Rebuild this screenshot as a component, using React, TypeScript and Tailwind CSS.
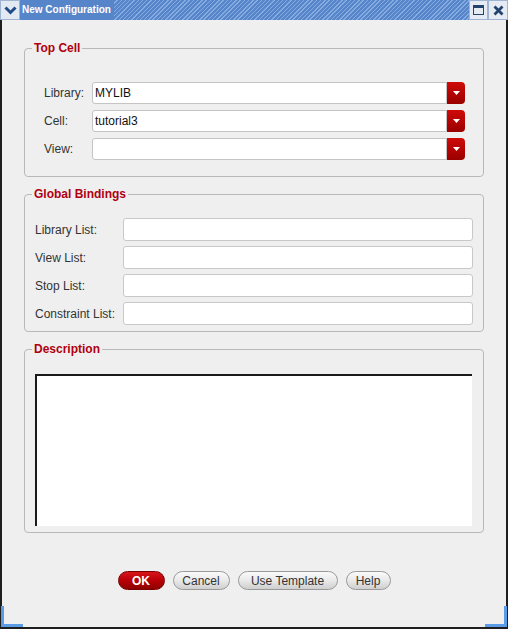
import { ReactNode } from 'react';

function Group({ title, children, className = '' }: { title: string; children: ReactNode; className?: string }) {
    return (
        <fieldset className="border border-[#b9b9b9] rounded-[4px]">
            <legend className="ml-[7px] px-[2px] text-[12px] font-bold text-[#b0000f] leading-[14px]">{title}</legend>
            <div className={className}>{children}</div>
        </fieldset>
    );
}

function ComboRow({ label, value }: { label: string; value: string }) {
    return (
        <div className="flex items-center h-[22px]">
            <span className="w-[48px] text-[12px] text-[#333]">{label}</span>
            <div className="flex-1 h-[22px] bg-white border border-[#c4c4c4] rounded-l-[3px] flex items-center pl-[2px] text-[12px] text-[#111]">
                {value}
            </div>
            <div className="w-[18px] h-[22px] rounded-r-[4px] bg-gradient-to-b from-[#d00a0a] to-[#9a0000] flex items-center justify-center">
                <svg width="7" height="4" viewBox="0 0 7 4">
                    <path d="M0 0h7L3.5 4z" fill="#fff" />
                </svg>
            </div>
        </div>
    );
}

function FieldRow({ label }: { label: string }) {
    return (
        <div className="flex items-center h-[23px]">
            <span className="w-[88px] text-[12px] text-[#333]">{label}</span>
            <div className="flex-1 h-[23px] bg-white border border-[#c8c8c8] rounded-[3px]" />
        </div>
    );
}

function Btn({ children, primary = false, className = '' }: { children: ReactNode; primary?: boolean; className?: string }) {
    return primary ? (
        <button className={`h-[19px] rounded-full bg-gradient-to-b from-[#d8141a] via-[#b80008] to-[#8f0000] border border-[#7a0000] text-white font-bold text-[12px] leading-none ${className}`}>
            {children}
        </button>
    ) : (
        <button className={`h-[19px] rounded-full bg-gradient-to-b from-[#fafafa] via-[#e9e9e9] to-[#cfcfcf] border border-[#9a9a9a] text-[#333] text-[12px] leading-none ${className}`}>
            {children}
        </button>
    );
}

export default function App() {
    return (
        <div className="relative w-[508px] h-[629px] bg-[#efefef] flex flex-col border-l-2 border-r-2 border-b-2 border-[#1e1e1e] font-['Liberation_Sans',Arial,sans-serif]">
            {/* title bar */}
            <div className="flex h-[20px] -mx-[2px] bg-[#5685c9]">
                <div className="w-[20px] h-[20px] bg-[#e3e9f3] border border-[#9fb3d2] flex items-center justify-center">
                    <svg width="13" height="9" viewBox="0 0 13 9">
                        <path d="M1.5 1.5l5 5 5-5" stroke="#1f4a86" strokeWidth="3" fill="none" />
                    </svg>
                </div>
                <span className="pl-[2px] pr-[3px] text-white font-bold text-[10px] leading-[20px] bg-[#5685c9]">New Configuration</span>
                <div className="flex-1 bg-[repeating-linear-gradient(135deg,#5685c9_0px,#5685c9_2px,#86abe0_2px,#86abe0_3px)]" />
                <div className="w-[19px] h-[20px] bg-[#e6ebf3] border border-[#9fb3d2] flex items-center justify-center">
                    <svg width="11" height="10" viewBox="0 0 11 10">
                        <rect x="0.5" y="0.5" width="10" height="9" fill="none" stroke="#23436f" />
                        <rect x="0" y="0" width="11" height="3" fill="#23436f" />
                    </svg>
                </div>
                <div className="w-[20px] h-[20px] bg-[#e6ebf3] border border-[#9fb3d2] flex items-center justify-center">
                    <svg width="11" height="11" viewBox="0 0 11 11">
                        <path d="M1.5 1.5l8 8M9.5 1.5l-8 8" stroke="#23436f" strokeWidth="2.8" />
                    </svg>
                </div>
            </div>

            <div className="flex flex-col px-[22px] pt-[21px] gap-[10px]">
                <Group title="Top Cell" className="pl-[19px] pr-[18px] pt-[27px] pb-[16px]">
                    <div className="flex flex-col gap-[6px]">
                        <ComboRow label="Library:" value="MYLIB" />
                        <ComboRow label="Cell:" value="tutorial3" />
                        <ComboRow label="View:" value="" />
                    </div>
                </Group>

                <Group title="Global Bindings" className="pl-[10px] pr-[10px] pt-[17px] pb-[6px]">
                    <div className="flex flex-col gap-[5px]">
                        <FieldRow label="Library List:" />
                        <FieldRow label="View List:" />
                        <FieldRow label="Stop List:" />
                        <FieldRow label="Constraint List:" />
                    </div>
                </Group>

                <Group title="Description" className="pl-[10px] pr-[11px] pt-[18px] pb-[6px]">
                    <div className="h-[152px] bg-white border-t-2 border-l-2 border-[#1a1a1a]" />
                </Group>
            </div>

            <div className="flex justify-center gap-[8px] mt-[38px]">
                <Btn primary className="w-[47px]">OK</Btn>
                <Btn className="w-[57px]">Cancel</Btn>
                <Btn className="w-[100px]">Use Template</Btn>
                <Btn className="w-[45px]">Help</Btn>
            </div>

            {/* window corner accents */}
            <div className="absolute -left-[1px] bottom-0 w-[22px] h-[3px] bg-[#5b9be6]" />
            <div className="absolute -left-[1px] bottom-0 w-[3px] h-[21px] bg-[#5b9be6]" />
            <div className="absolute -right-[1px] bottom-0 w-[22px] h-[3px] bg-[#5b9be6]" />
            <div className="absolute -right-[1px] bottom-0 w-[3px] h-[21px] bg-[#5b9be6]" />
        </div>
    );
}
